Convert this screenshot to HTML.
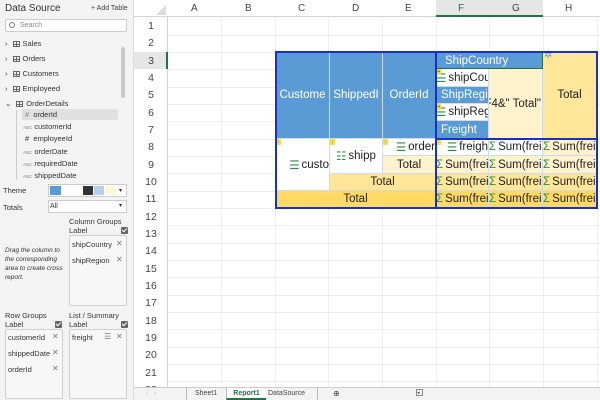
<!DOCTYPE html>
<html><head><meta charset="utf-8"><style>
*{box-sizing:border-box;margin:0;padding:0}
body{width:600px;height:400px;overflow:hidden;background:#fff;font-family:"Liberation Sans",sans-serif;position:relative}
.a{position:absolute;white-space:nowrap}
#lp{position:absolute;left:0;top:0;width:134px;height:400px;background:#f3f3f3;border-right:1px solid #ddd;font-size:7.5px;color:#333}
.box{position:absolute;background:#f7f7f7;border:1px solid #d0d0d0;border-radius:2px}
.x{position:absolute;color:#777;font-size:8px}
.chk{position:absolute;width:7px;height:7px;background:#666;border-radius:1px}
.chk:after{content:"";position:absolute;left:2px;top:0px;width:2px;height:4px;border:solid #fff;border-width:0 1px 1px 0;transform:rotate(45deg)}
.ti{position:absolute;left:5px;font-size:7.5px}
.tbl{display:inline-block;width:7px;height:6px;border:1px solid #666;background:linear-gradient(#666,#666) 0 2px/100% 1px no-repeat,linear-gradient(#666,#666) 2px 0/1px 100% no-repeat;vertical-align:-1px;margin:0 3px 0 5px}
.c{position:absolute;display:flex;align-items:center;justify-content:center;font-size:11.5px;overflow:hidden;white-space:nowrap;color:#222;border-right:1px solid #cfdbe8;border-bottom:1px solid #cfdbe8}
.b{background:#5b9bd5;color:#fff}
.y1{background:#fff2cc}.y2{background:#ffe699}.y3{background:#ffd966}.w{background:#fff}
.s{color:#2e8b3e;margin-right:2px}
.ar{position:absolute;left:0;top:0;width:5px;height:6px;background:#f5e04a;font-size:5px;color:#a07000;line-height:6px;text-align:center}
</style></head><body>
<div id="lp">
<div class="a" style="left:5px;top:3px;font-size:10px;color:#333">Data Source</div>
<div class="a" style="left:91px;top:5px;font-size:7px;color:#444">+ Add Table</div>
<div class="a" style="left:5px;top:19px;width:122px;height:13px;background:#fff;border:1px solid #ccc;border-radius:2px;font-size:7px;color:#888;padding:2px 0 0 14px">Search</div>
<div class="a" style="left:9px;top:22px;width:6px;height:6px;border:1px solid #777;border-radius:50%"></div>
<div class="ti" style="top:39px">›<span class="tbl"></span>Sales</div>
<div class="ti" style="top:54px">›<span class="tbl"></span>Orders</div>
<div class="ti" style="top:69px">›<span class="tbl"></span>Customers</div>
<div class="ti" style="top:84px">›<span class="tbl"></span>Employeed</div>
<div class="ti" style="top:99px">⌄<span class="tbl"></span>OrderDetails</div>
<div class="a" style="left:22px;top:109px;width:96px;height:11px;background:#e0e0e0"></div>
<div class="a" style="left:16px;top:110px;width:1px;height:70px;background:#ccc"></div>
<div class="ti" style="left:25px;top:110px"><span style="color:#888">#</span>&nbsp; orderId</div>
<div class="ti" style="left:23px;top:122px"><span style="font-size:4.5px;color:#888">ABC</span> customerId</div>
<div class="ti" style="left:25px;top:134px">#&nbsp; employeeId</div>
<div class="ti" style="left:23px;top:147px"><span style="font-size:4.5px;color:#888">ABC</span> orderDate</div>
<div class="ti" style="left:23px;top:159px"><span style="font-size:4.5px;color:#888">ABC</span> requiredDate</div>
<div class="ti" style="left:23px;top:171px"><span style="font-size:4.5px;color:#888">ABC</span> shippedDate</div>
<div class="a" style="left:121px;top:47px;width:4px;height:51px;background:#c8c8c8;border-radius:2px"></div>
<div class="ti" style="left:3px;top:186px">Theme</div>
<div class="a" style="left:48px;top:184px;width:79px;height:13px;background:#fff;border:1px solid #ccc"></div>
<div class="a" style="left:50px;top:186px;width:11px;height:9px;background:#5b9bd5"></div>
<div class="a" style="left:83px;top:186px;width:10px;height:9px;background:#333"></div>
<div class="a" style="left:94px;top:186px;width:10px;height:9px;background:#b4cfe9"></div>
<div class="a" style="left:105px;top:186px;width:10px;height:9px;background:#fff5d8"></div>
<div class="a" style="left:119px;top:187px;font-size:6px">▾</div>
<div class="ti" style="left:3px;top:203px">Totals</div>
<div class="a" style="left:48px;top:200px;width:79px;height:13px;background:#fff;border:1px solid #ccc;font-size:7px;padding:2px 0 0 1px">All</div>
<div class="a" style="left:119px;top:202px;font-size:6px">▾</div>
<div class="ti" style="left:69px;top:217px;line-height:9px">Column Groups<br>Label</div>
<div class="chk" style="left:121px;top:227px"></div>
<div class="box" style="left:69px;top:235px;width:58px;height:71px"></div>
<div class="ti" style="left:72px;top:240px">shipCountry</div><div class="x" style="left:116px;top:239px">✕</div>
<div class="ti" style="left:72px;top:256px">shipRegion</div><div class="x" style="left:116px;top:255px">✕</div>
<div class="ti" style="left:5px;top:246px;font-style:italic;line-height:9px;font-size:6.5px">Drag the column to<br>the corresponding<br>area to create cross<br>report.</div>
<div class="ti" style="left:5px;top:311px;line-height:9px">Row Groups<br>Label</div>
<div class="chk" style="left:55px;top:321px"></div>
<div class="ti" style="left:69px;top:311px;line-height:9px">List / Summary<br>Label</div>
<div class="chk" style="left:121px;top:321px"></div>
<div class="box" style="left:5px;top:329px;width:58px;height:70px"></div>
<div class="box" style="left:69px;top:329px;width:58px;height:70px"></div>
<div class="ti" style="left:8px;top:333px">customerId</div><div class="x" style="left:52px;top:332px">✕</div>
<div class="ti" style="left:8px;top:349px">shippedDate</div><div class="x" style="left:52px;top:348px">✕</div>
<div class="ti" style="left:8px;top:365px">orderId</div><div class="x" style="left:52px;top:364px">✕</div>
<div class="ti" style="left:72px;top:333px">freight</div><div class="x" style="left:104px;top:332px">☰</div><div class="x" style="left:116px;top:332px">✕</div>
</div>

<div class="a" style="left:134px;top:0;width:466px;height:17px;background:#fff;border-bottom:1px solid #d4d4d4"></div>
<div class="a" style="left:134px;top:17px;width:34px;height:370px;background:#fff;border-right:1px solid #d4d4d4"></div>
<div class="a" style="left:168px;top:17.5px;width:432px;height:370px;background:repeating-linear-gradient(90deg,transparent 0 53.2px,#dcdcdc 53.2px 53.7px),repeating-linear-gradient(180deg,transparent 0 16.83px,#dcdcdc 16.83px 17.33px)"></div>
<div class="a" style="left:134px;top:52px;width:34px;height:17px;background:#e6e6e6"></div>
<div class="a" style="left:166px;top:52px;width:2px;height:17px;background:#217346"></div>
<div class="a" style="left:436px;top:0;width:107px;height:17px;background:#e6e6e6;border-bottom:2px solid #217346"></div>

<div class="c b" style="left:276px;top:52px;width:54px;height:87px">Custome</div>
<div class="c b" style="left:330px;top:52px;width:53px;height:87px">ShippedI</div>
<div class="c b" style="left:383px;top:52px;width:53px;height:87px">OrderId</div>
<div class="c b" style="left:436px;top:52px;width:107px;height:17px;justify-content:flex-start;padding-left:8px;border:1.5px solid #217346">ShipCountry</div>
<div class="c w" style="left:436px;top:69px;width:53px;height:18px;justify-content:flex-start"><span class="s">☰</span>shipCoun<span class="ar">➔</span></div>
<div class="c b" style="left:436px;top:87px;width:53px;height:17px;justify-content:flex-start;padding-left:5px">ShipRegi</div>
<div class="c w" style="left:436px;top:104px;width:53px;height:17px;justify-content:flex-start"><span class="s">☰</span>shipRegi<span class="ar">➔</span></div>
<div class="c b" style="left:436px;top:121px;width:53px;height:18px;justify-content:flex-start;padding-left:5px">Freight</div>
<div class="c y1" style="left:489px;top:69px;width:54px;height:70px;justify-content:flex-end;padding-right:1px">F4&amp;" Total"</div>
<div class="c y2" style="left:543px;top:52px;width:54px;height:87px">Total</div>
<div class="a" style="left:544px;top:50px;color:#5b9bd5;font-size:10px">✲</div>
<div class="c w" style="left:276px;top:139px;width:54px;height:52px;justify-content:flex-end"><span class="s">☰</span>custo<span class="ar">↓</span></div>
<div class="c w" style="left:330px;top:139px;width:53px;height:35px"><span class="s">☷</span>shipp<span class="ar">↓</span></div>
<div class="c w" style="left:383px;top:139px;width:53px;height:17px;justify-content:flex-end"><span class="s">☰</span>order<span class="ar">↓</span></div>
<div class="c y1" style="left:383px;top:156px;width:53px;height:18px">Total</div>
<div class="c y2" style="left:330px;top:174px;width:106px;height:17px">Total</div>
<div class="c y3" style="left:276px;top:191px;width:160px;height:17px">Total</div>
<div class="c w" style="left:436px;top:139px;width:53px;height:17px;justify-content:flex-end"><span class="s">☰</span>freigh<span class="ar">↓</span></div>
<div class="c w" style="left:489px;top:139px;width:54px;height:17px;justify-content:flex-start"><span class="s">Σ</span>Sum(frei</div>
<div class="c y1" style="left:543px;top:139px;width:54px;height:17px;justify-content:flex-start"><span class="s">Σ</span>Sum(frei</div>
<div class="c y1" style="left:436px;top:156px;width:53px;height:18px;justify-content:flex-start"><span class="s">Σ</span>Sum(frei</div>
<div class="c y1" style="left:489px;top:156px;width:54px;height:18px;justify-content:flex-start"><span class="s">Σ</span>Sum(frei</div>
<div class="c y1" style="left:543px;top:156px;width:54px;height:18px;justify-content:flex-start"><span class="s">Σ</span>Sum(frei</div>
<div class="c y2" style="left:436px;top:174px;width:53px;height:17px;justify-content:flex-start"><span class="s">Σ</span>Sum(frei</div>
<div class="c y2" style="left:489px;top:174px;width:54px;height:17px;justify-content:flex-start"><span class="s">Σ</span>Sum(frei</div>
<div class="c y2" style="left:543px;top:174px;width:54px;height:17px;justify-content:flex-start"><span class="s">Σ</span>Sum(frei</div>
<div class="c y3" style="left:436px;top:191px;width:53px;height:17px;justify-content:flex-start"><span class="s">Σ</span>Sum(frei</div>
<div class="c y3" style="left:489px;top:191px;width:54px;height:17px;justify-content:flex-start"><span class="s">Σ</span>Sum(frei</div>
<div class="c y3" style="left:543px;top:191px;width:54px;height:17px;justify-content:flex-start"><span class="s">Σ</span>Sum(frei</div>
<div class="a" style="left:275px;top:51px;width:323px;height:158px;border:2px solid #1a2fc9"></div>
<div class="a" style="left:435px;top:51px;width:2px;height:158px;background:#1a2fc9"></div>
<div class="a" style="left:435px;top:138px;width:163px;height:2px;background:#1a2fc9"></div>

<div class="a" style="left:134px;top:0;width:34px;height:17px"><div style="position:absolute;right:2px;bottom:2px;width:0;height:0;border-left:10px solid transparent;border-bottom:10px solid #dcdcdc"></div></div>
<div style="position:absolute;left:168px;top:3px;font-size:10px;color:#444">
<span class="a" style="left:23px">A</span><span class="a" style="left:77px">B</span><span class="a" style="left:130px">C</span><span class="a" style="left:184px">D</span><span class="a" style="left:237px">E</span><span class="a" style="left:290px;color:#217346">F</span><span class="a" style="left:344px">G</span><span class="a" style="left:397px">H</span></div>
<div style="position:absolute;left:134px;top:18px;width:34px;font-size:10.5px;color:#444;text-align:center;line-height:17.33px">1<br>2<br>3<br>4<br>5<br>6<br>7<br>8<br>9<br>10<br>11<br>12<br>13<br>14<br>15<br>16<br>17<br>18<br>19<br>20<br>21<br>22</div>
<div class="a" style="left:134px;top:387px;width:466px;height:13px;background:#f3f3f3;border-top:1px solid #ccc;font-size:7px;color:#444">
<span class="a" style="left:12px;top:2px;color:#bbb">‹ &nbsp; ›</span>
<span class="a" style="left:52px;top:0;height:12px;border-left:1px solid #bbb;padding:2px 0 0 8px">Sheet1</span>
<span class="a" style="left:92px;top:0;height:12px;border-left:1px solid #bbb;padding-top:2px;width:40px;text-align:center;color:#217346;font-weight:bold;background:#fff;border-bottom:2px solid #217346">Report1</span>
<span class="a" style="left:134px;top:2px">DataSource</span>
<span class="a" style="left:183px;top:0;height:12px;border-left:1px solid #bbb"></span>
<span class="a" style="left:199px;top:1px;font-size:8px">⊕</span>
<span class="a" style="left:282px;top:1px;width:7px;height:7px;border:1px solid #888;font-size:5px">◂</span>
</div>
</body></html>
